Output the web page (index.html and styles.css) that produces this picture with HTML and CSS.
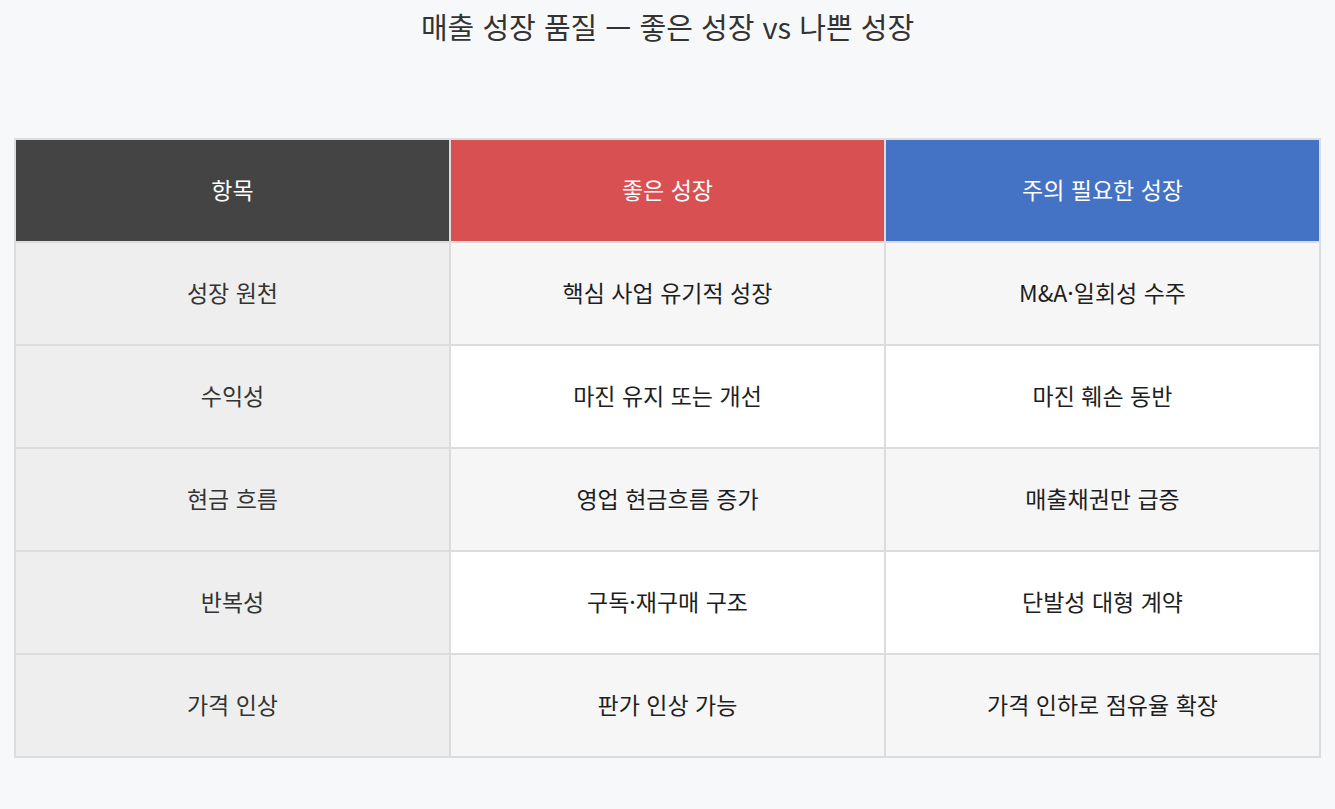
FILE: index.html
```html
<!DOCTYPE html>
<html lang="ko">
<head>
<meta charset="utf-8">
<link rel="stylesheet" href="styles.css">
</head>
<body>
<div class="page">
  <h1 class="title">매출 성장 품질 — 좋은 성장 vs 나쁜 성장</h1>
  <table class="cmp">
    <thead>
      <tr>
        <th class="h-item">항목</th>
        <th class="h-good">좋은 성장</th>
        <th class="h-bad">주의 필요한 성장</th>
      </tr>
    </thead>
    <tbody>
      <tr class="odd"><td class="label">성장 원천</td><td>핵심 사업 유기적 성장</td><td>M&amp;A·일회성 수주</td></tr>
      <tr class="even"><td class="label">수익성</td><td>마진 유지 또는 개선</td><td>마진 훼손 동반</td></tr>
      <tr class="odd"><td class="label">현금 흐름</td><td>영업 현금흐름 증가</td><td>매출채권만 급증</td></tr>
      <tr class="even"><td class="label">반복성</td><td>구독·재구매 구조</td><td>단발성 대형 계약</td></tr>
      <tr class="odd"><td class="label">가격 인상</td><td>판가 인상 가능</td><td>가격 인하로 점유율 확장</td></tr>
    </tbody>
  </table>
</div>
</body>
</html>
```

FILE: styles.css
```css
html, body {
  margin: 0;
  padding: 0;
  background: #f7f8fa;
}
.page {
  padding: 0 14px;
  font-family: "Noto Sans CJK KR", "Noto Sans", sans-serif;
}
.title {
  margin: 0;
  padding-top: 6px;
  height: 138px;
  box-sizing: border-box;
  text-align: center;
  font-size: 29px;
  font-weight: 400;
  color: #333;
  line-height: 40px;
}
.cmp {
  width: 100%;
  border-collapse: collapse;
  table-layout: fixed;
  border: 2px solid #dcdcdc;
}
.cmp th, .cmp td {
  border: 2px solid #dcdcdc;
  height: 103px;
  box-sizing: border-box;
  padding: 0 0 4px 0;
  text-align: center;
  vertical-align: middle;
  font-size: 23px;
  font-weight: 400;
}
.cmp th {
  color: #fff;
}
.h-item { background: #444444; }
.h-good { background: #d95052; }
.h-bad { background: #4472c4; }
.cmp td { color: #1e1e1e; }
.odd td { background: #f6f6f6; }
.even td { background: #ffffff; }
.cmp td.label { background: #eeeeee; color: #333; }
```
